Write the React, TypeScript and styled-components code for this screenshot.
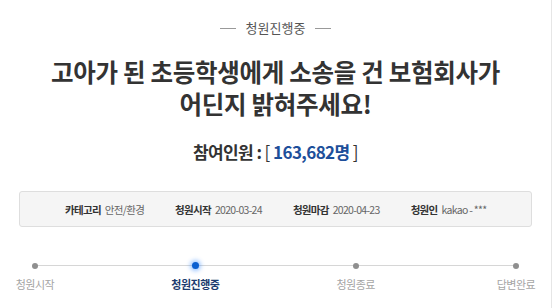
import React from "react";
import styled, { createGlobalStyle } from "styled-components";

const GlobalStyle = createGlobalStyle`
  html, body {
    margin: 0;
    padding: 0;
    background: #fff;
  }
  body {
    font-family: "Noto Sans CJK KR", "Noto Sans", sans-serif;
    color: #333;
  }
`;

const Page = styled.div`
  width: 552px;
  height: 308px;
  box-sizing: border-box;
  border-right: 1px solid #e6e6e6;
  padding: 17px 19px 0;
  display: flex;
  flex-direction: column;
  align-items: center;
`;

const Status = styled.div`
  display: flex;
  align-items: center;
  gap: 10px;
  font-size: 13px;
  line-height: 22px;
  color: #555;
  &::before,
  &::after {
    content: "";
    width: 16px;
    height: 1px;
    background: #999;
  }
`;

const Title = styled.h1`
  margin: 17px 0 0;
  font-size: 24.5px;
  line-height: 32px;
  font-weight: 700;
  letter-spacing: -0.3px;
  color: #333;
  text-align: center;
  white-space: nowrap;
`;

const Count = styled.div`
  margin-top: 20px;
  font-size: 17px;
  line-height: 24px;
  font-weight: 700;
  color: #333;
  letter-spacing: -0.6px;
`;

const Bracket = styled.span`
  font-weight: 400;
`;

const Number = styled.span`
  color: #1d4f9a;
`;

const InfoBox = styled.div`
  align-self: stretch;
  margin-top: 27px;
  height: 36px;
  box-sizing: border-box;
  border: 1px solid #dedede;
  border-radius: 3px;
  background: #f5f5f5;
  display: flex;
  align-items: center;
  padding-left: 45px;
  gap: 31px;
  font-size: 10.5px;
  letter-spacing: -0.7px;
`;

const InfoItem = styled.div`
  display: flex;
  gap: 4px;
  white-space: nowrap;
`;

const InfoLabel = styled.span`
  font-weight: 700;
  color: #333;
`;

const InfoValue = styled.span`
  color: #666;
`;

const Progress = styled.div`
  align-self: stretch;
  margin: 34px -14px 0;
  position: relative;
  display: flex;
  justify-content: space-between;
  &::before {
    content: "";
    position: absolute;
    left: 30px;
    right: 30px;
    top: 4px;
    height: 1px;
    background: #d6d6d6;
  }
`;

const Step = styled.div`
  width: 60px;
  display: flex;
  flex-direction: column;
  align-items: center;
  gap: 8px;
  position: relative;
`;

const Dot = styled.span<{ $active?: boolean }>`
  width: ${(p) => (p.$active ? 7 : 6)}px;
  height: ${(p) => (p.$active ? 7 : 6)}px;
  margin-top: ${(p) => (p.$active ? 1 : 1.5)}px;
  border-radius: 50%;
  background: ${(p) => (p.$active ? "#0a5fd0" : "#8f8f8f")};
  box-shadow: ${(p) => (p.$active ? "0 0 4px 2px rgba(40,130,255,0.45)" : "none")};
`;

const StepLabel = styled.span<{ $active?: boolean }>`
  font-size: 11px;
  line-height: 14px;
  letter-spacing: -0.5px;
  white-space: nowrap;
  font-weight: ${(p) => (p.$active ? 700 : 400)};
  color: ${(p) => (p.$active ? "#1c3b6e" : "#a5a5a5")};
`;

const steps = ["청원시작", "청원진행중", "청원종료", "답변완료"];

export default function App() {
  return (
    <>
      <GlobalStyle />
      <Page>
        <Status>청원진행중</Status>
        <Title>
          고아가 된 초등학생에게 소송을 건 보험회사가
          <br />
          어딘지 밝혀주세요!
        </Title>
        <Count>
          참여인원 : <Bracket>[</Bracket> <Number>163,682명</Number>{" "}
          <Bracket>]</Bracket>
        </Count>
        <InfoBox>
          <InfoItem>
            <InfoLabel>카테고리</InfoLabel>
            <InfoValue>안전/환경</InfoValue>
          </InfoItem>
          <InfoItem>
            <InfoLabel>청원시작</InfoLabel>
            <InfoValue>2020-03-24</InfoValue>
          </InfoItem>
          <InfoItem>
            <InfoLabel>청원마감</InfoLabel>
            <InfoValue>2020-04-23</InfoValue>
          </InfoItem>
          <InfoItem>
            <InfoLabel>청원인</InfoLabel>
            <InfoValue>kakao - ***</InfoValue>
          </InfoItem>
        </InfoBox>
        <Progress>
          {steps.map((s, i) => (
            <Step key={s}>
              <Dot $active={i === 1} />
              <StepLabel $active={i === 1}>{s}</StepLabel>
            </Step>
          ))}
        </Progress>
      </Page>
    </>
  );
}
